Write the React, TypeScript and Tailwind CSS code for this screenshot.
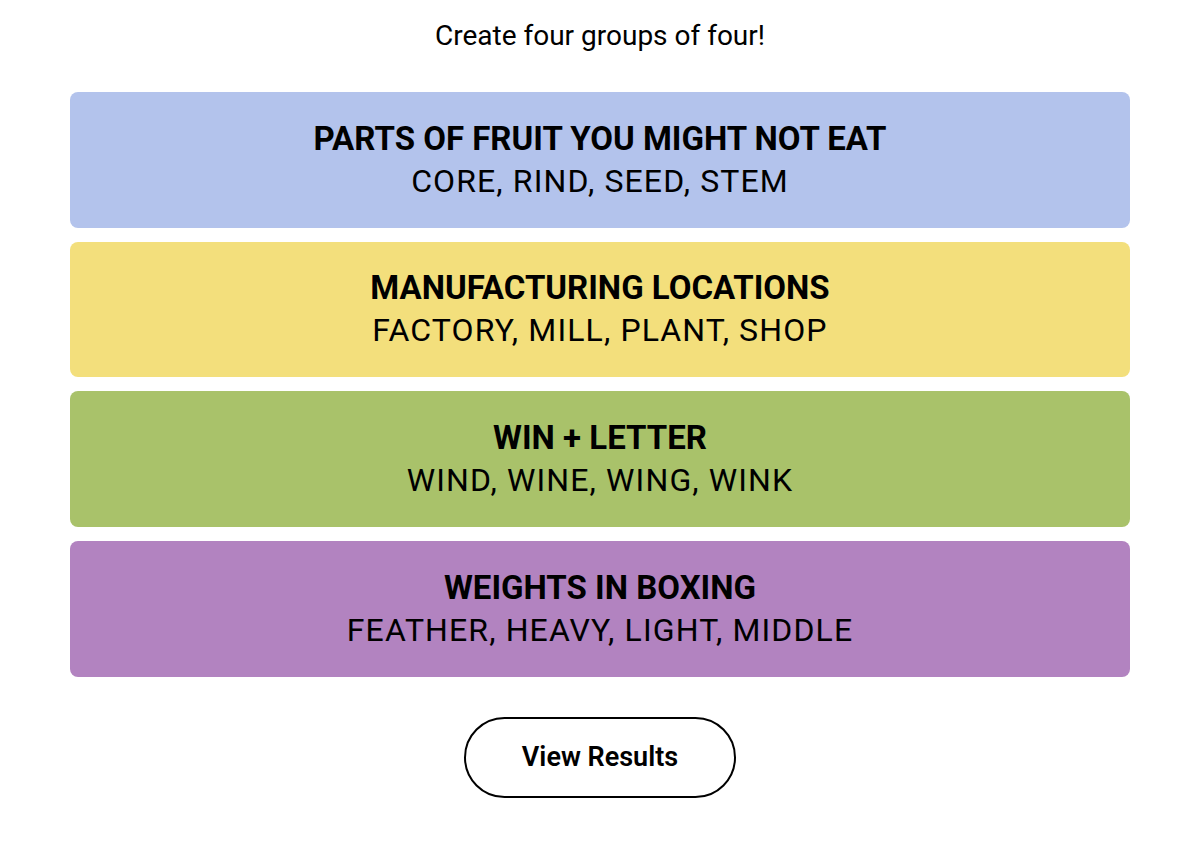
const groups = [
  {
    title: 'PARTS OF FRUIT YOU MIGHT NOT EAT',
    words: 'CORE, RIND, SEED, STEM',
    color: 'bg-[#b3c3ec]',
  },
  {
    title: 'MANUFACTURING LOCATIONS',
    words: 'FACTORY, MILL, PLANT, SHOP',
    color: 'bg-[#f3df7c]',
  },
  {
    title: 'WIN + LETTER',
    words: 'WIND, WINE, WING, WINK',
    color: 'bg-[#a9c26a]',
  },
  {
    title: 'WEIGHTS IN BOXING',
    words: 'FEATHER, HEAVY, LIGHT, MIDDLE',
    color: 'bg-[#b283c0]',
  },
]

export default function App() {
  return (
    <div className="min-h-screen w-[1200px] bg-white text-black font-['Roboto',sans-serif]">
      <div className="flex flex-col items-center pt-[16px]">
        <p className="text-[28px] leading-[40px]">Create four groups of four!</p>
        <div className="mt-[36px] flex w-[1060px] flex-col gap-[14px]">
          {groups.map(group => (
            <div
              key={group.title}
              className={`flex h-[135.67px] flex-col items-center justify-center rounded-[8px] ${group.color}`}
            >
              <p className="text-[33px] font-bold leading-[43px]">{group.title}</p>
              <p className="text-[32px] leading-[43px] tracking-[0.035em]">{group.words}</p>
            </div>
          ))}
        </div>
        <button className="mt-[40px] h-[81px] w-[272px] rounded-full border-2 border-black text-[27px] font-semibold">
          View Results
        </button>
      </div>
    </div>
  )
}
